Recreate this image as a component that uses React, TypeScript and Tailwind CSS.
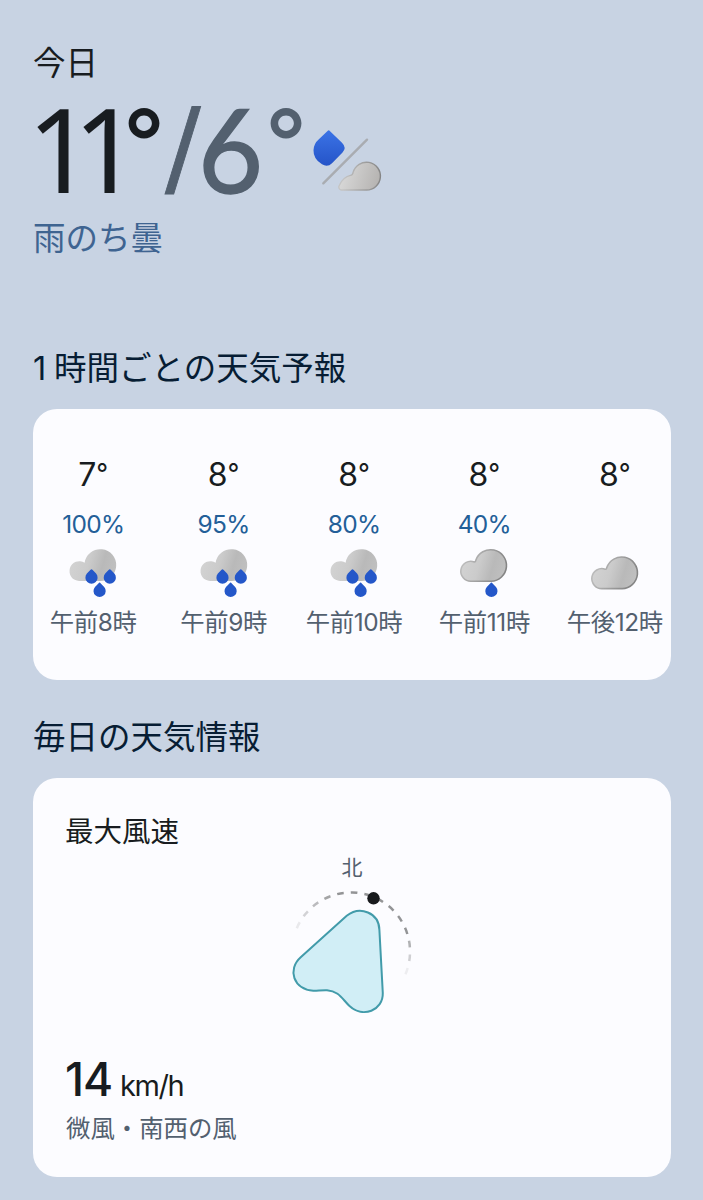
import { useId } from 'react';

type Sky = 'heavy' | 'light' | 'cloudy';

const hours: { temp: number; rain: string; sky: Sky; time: string }[] = [
    { temp: 7, rain: '100%', sky: 'heavy', time: '午前8時' },
    { temp: 8, rain: '95%', sky: 'heavy', time: '午前9時' },
    { temp: 8, rain: '80%', sky: 'heavy', time: '午前10時' },
    { temp: 8, rain: '40%', sky: 'light', time: '午前11時' },
    { temp: 8, rain: '', sky: 'cloudy', time: '午後12時' },
];

function Cloud({ rim = true }: { rim?: boolean }) {
    const id = useId();
    return (
        <>
            <defs>
                <linearGradient id={`${id}f`} x1="0" y1="0.4" x2="1" y2="0.6">
                    <stop offset="0" stopColor="#d3d3d3" />
                    <stop offset="0.4" stopColor="#cbcbcb" />
                    <stop offset="0.7" stopColor="#b9b9b9" />
                    <stop offset="1" stopColor="#c0c0c0" />
                </linearGradient>
                <linearGradient id={`${id}s`} x1="0" y1="0" x2="1" y2="0.3">
                    <stop offset="0.1" stopColor="#c0c0c0" />
                    <stop offset="1" stopColor="#858585" />
                </linearGradient>
            </defs>
            {rim ? (
                <path
                    d="M17.4 36.6A10 10 0 1 1 20.6 17.2Q22 17.4 22.1 15.8A15.8 15.8 0 1 1 37.5 36.6Z"
                    fill={`url(#${id}f)`}
                    stroke={`url(#${id}s)`}
                    strokeWidth="1.6"
                />
            ) : (
                <path
                    d="M16.5 36.3A9.9 9.9 0 1 1 22 18A15.9 15.9 0 1 1 37.5 36.3Z"
                    fill={`url(#${id}f)`}
                />
            )}
        </>
    );
}

function Drop({ x, y }: { x: number; y: number }) {
    return (
        <path
            transform={`translate(${x} ${y})`}
            d="M0 -7.7Q.5 -7.7 1.2 -6.9L4.6 -3.4A6.1 6.1 0 1 1 -4.6 -3.4L-1.2 -6.9Q-.5 -7.7 0 -7.7Z"
            fill="#2457c9"
        />
    );
}

function SkyIcon({ sky }: { sky: Sky }) {
    return (
        <svg width="60" height="60" viewBox="0.4 0.3 60 60">
            {sky === 'cloudy' ? (
                <g transform="translate(0 7.3)">
                    <Cloud />
                </g>
            ) : (
                <Cloud rim={sky === 'light'} />
            )}
            {sky === 'heavy' && (
                <>
                    <Drop x={28.9} y={32.3} />
                    <Drop x={47.2} y={32.3} />
                </>
            )}
            {sky !== 'cloudy' && <Drop x={sky === 'heavy' ? 37 : 37.8} y={45.6} />}
        </svg>
    );
}

function RainThenCloud() {
    return (
        <svg width="72" height="66" viewBox="0 0 72 66">
            <defs>
                <linearGradient id="rain" x1="0" y1="0" x2="0" y2="1">
                    <stop offset="0" stopColor="#3b73e6" />
                    <stop offset="1" stopColor="#2554c8" />
                </linearGradient>
                <linearGradient id="cloud" x1="0" y1="0.5" x2="1" y2="0.7">
                    <stop offset="0" stopColor="#dadada" />
                    <stop offset="1" stopColor="#b4b2b0" />
                </linearGradient>
                <linearGradient id="rim" x1="0" y1="0" x2="1" y2="0">
                    <stop offset="0.1" stopColor="#c4c4c4" />
                    <stop offset="1" stopColor="#858585" />
                </linearGradient>
            </defs>
            <path
                d="M18.3 5.6L31 17.8Q36 22.8 31.5 27.5L21 38.2Q16.5 42.6 11 39.3Q2.2 34 2.5 25.2Q2.8 18.6 7.6 14.5L16.8 5.8Q17.6 5 18.3 5.6Z"
                fill="url(#rain)"
            />
            <path d="M12.3 58.3L56 14.7" stroke="#a9acb1" strokeWidth="2.4" strokeLinecap="round" />
            <path
                d="M30 65Q26.5 63.2 28.5 60Q32.5 51.8 39.5 50.4Q41.6 50.1 42.1 47.4A13.9 13.9 0 1 1 55.4 65Z"
                fill="url(#cloud)"
                stroke="url(#rim)"
                strokeWidth="1.4"
            />
        </svg>
    );
}

function WindCompass() {
    // Ticks fade out towards both ends of the arc
    const ticks = Array.from({ length: 14 }, (_, i) => i - 5);
    return (
        <svg width="140" height="135" viewBox="282 885 140 135" className="block">
            {ticks.map((i) => (
                <path
                    key={i}
                    d="M347.7 892.6Q351 892.3 354.3 892.6"
                    transform={`rotate(${3 + 13.3 * i} 351 951.5)`}
                    fill="none"
                    stroke="#939496"
                    strokeWidth="2.5"
                    opacity={Math.min(1, (i + 5.8) / 4.5, (8.5 - i) / 3.5)}
                />
            ))}
            <circle cx="373.5" cy="898.3" r="6.2" fill="#181a1d" />
            <path
                d="M300.7 957.3L346.7 915.7C360 905.5 379 912.5 379.4 930L382.8 993C383.2 1010.5 363 1018.5 349.5 1006C342.5 999.5 339 991 327 990.2C321 990 318 990.8 313.3 990.7C293.5 989.5 287 969.5 300.7 957.3Z"
                fill="#d1eef6"
                stroke="#429baa"
                strokeWidth="2"
            />
        </svg>
    );
}

export default function App() {
    return (
        <main className="h-[1200px] w-[703px] overflow-hidden bg-[#c8d3e3] px-[33px] pt-[39px] font-[Inter,'Noto_Sans_CJK_JP',sans-serif] text-[#181c20]">
            <h1 className="h-[50px] text-[32.5px] leading-[50px]">今日</h1>
            <div className="flex h-[122px] items-start">
                <p className="flex text-[116px] leading-[124px]">
                    <span className="-ml-[6px] w-[96px] font-['Noto_Sans'] text-[117px] leading-[118px] tracking-[-21px]">11</span>
                    <span className="w-[41px] text-[92px] leading-[106px] font-medium">°</span>
                    <span className="w-[34px] origin-left scale-x-[0.83] font-['Noto_Sans'] text-[122px] leading-[117px] text-[#53606f] [-webkit-text-stroke:1px_currentColor]">/</span>
                    <span className="w-[67px] origin-left scale-x-[0.96] font-[Lato] text-[117px] leading-[119px] text-[#53606f] [-webkit-text-stroke:1.5px_currentColor]">6</span>
                    <span className="w-[46px] text-[92px] leading-[106px] font-medium text-[#53606f]">°</span>
                </p>
                <div className="mt-[36px]">
                    <RainThenCloud />
                </div>
            </div>
            <p className="h-[54px] pt-px text-[32.5px] leading-[54px] text-[#3f6491]">雨のち曇</p>

            <h2 className="mt-[79px] h-[50px] text-[32.5px] leading-[50px] text-[#071d34]">
                <span className="mr-[8px] inline-block w-[13px]">1</span>時間ごとの天気予報
            </h2>
            <section className="mt-[15px] h-[271px] w-[638px] overflow-hidden rounded-[24px] bg-[#fcfcff]">
                <div className="-ml-[5px] flex pt-[42px]">
                    {hours.map((h) => (
                        <div key={h.time} className="flex w-[130.4px] shrink-0 flex-col items-center whitespace-nowrap">
                            <p className="flex h-[48px] text-[32px] leading-[48px]">
                                <span>{h.temp}</span>
                                <span className="text-[26px] leading-[43px]">°</span>
                            </p>
                            <p className="h-[46px] text-[24.5px] leading-[50px] tracking-[-0.7px] text-[#235f98]">{h.rain}</p>
                            <SkyIcon sky={h.sky} />
                            <p className="h-[36px] text-[24.4px] leading-[35px] tracking-[-0.4px] text-[#53606f]">{h.time}</p>
                        </div>
                    ))}
                </div>
            </section>

            <h2 className="mt-[32px] h-[50px] text-[32.5px] leading-[51px] text-[#071d34]">毎日の天気情報</h2>
            <section className="mt-[16px] h-[399px] w-[638px] rounded-[24px] bg-[#fcfcff] px-[33px] pt-[32px]">
                <h3 className="-ml-px h-[42px] text-[28.5px] leading-[44px]">最大風速</h3>
                <div className="flex h-[168px] flex-col items-center">
                    <p className="h-[33px] text-[21px] leading-[32px] text-[#53606f]">北</p>
                    <WindCompass />
                </div>
                <p className="-ml-px mt-[31px] flex h-[58px] items-baseline leading-[56px]">
                    <span className="w-[55px] text-[46px] font-medium tracking-[-1px]">14</span>
                    <span className="text-[29px] tracking-[-1.4px]">km/h</span>
                </p>
                <p className="h-[36px] text-[24.4px] leading-[38px] text-[#53606f]">微風・南西の風</p>
            </section>
        </main>
    );
}
